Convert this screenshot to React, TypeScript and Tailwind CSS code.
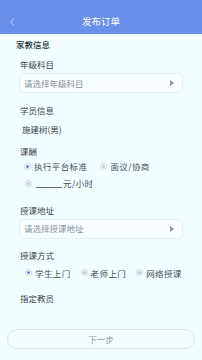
import { ChevronLeft } from 'lucide-react'

function Radio({ checked }: { checked?: boolean }) {
  return (
    <span className="flex h-[7px] w-[7px] shrink-0 items-center justify-center rounded-full border border-[#c9d3e0] bg-white">
      <span className={`h-[3px] w-[3px] rounded-full ${checked ? 'bg-[#5b86e5]' : 'bg-[#b8c2cf]'}`} />
    </span>
  )
}

function Option({ label, checked }: { label: string; checked?: boolean }) {
  return (
    <div className="flex items-center gap-[3px] whitespace-nowrap">
      <Radio checked={checked} />
      <span className="text-[8.5px] tracking-[0.4px] text-[#4a4f57]">{label}</span>
    </div>
  )
}

function SelectBox({ placeholder }: { placeholder: string }) {
  return (
    <div className="mx-[19px] mt-[3px] flex h-[20px] items-center justify-between rounded-[4px] border border-[#e6eef2] bg-[#f8feff] px-[4px]">
      <span className="text-[8.5px] text-[#8a9099]">{placeholder}</span>
      <span className="mr-[4px] h-0 w-0 border-y-[3px] border-l-[4px] border-y-transparent border-l-[#8e949b]" />
    </div>
  )
}

function Label({ text, className = '' }: { text: string; className?: string }) {
  return <div className={`px-[20px] text-[8.5px] leading-[12px] text-[#3e4349] ${className}`}>{text}</div>
}

export default function App() {
  return (
    <div
      className="flex h-[360px] w-[202px] flex-col bg-[#f1fdff]"
      style={{ fontFamily: '"Noto Sans CJK SC", "Noto Sans", sans-serif' }}
    >
      {/* Header */}
      <div className="relative flex h-[34px] items-end justify-center bg-[#6a8fe8] pb-[6px]">
        <ChevronLeft className="absolute left-[6px] bottom-[6px] h-[12px] w-[12px] text-[#dfe8ff]" strokeWidth={1.5} />
        <span className="text-[9.5px] leading-[14px] text-white">发布订单</span>
      </div>

      <div className="px-[16px] pt-[4px] text-[8.5px] leading-[12px] font-medium text-[#2f3338]">家教信息</div>

      <Label text="年级科目" className="mt-[8px]" />
      <SelectBox placeholder="请选择年级科目" />

      <Label text="学员信息" className="mt-[11px]" />
      <div className="mt-[7px] px-[22px] text-[8.5px] leading-[12px] text-[#3a3f45]">施建树(男)</div>

      <Label text="课酬" className="mt-[10px]" />
      <div className="mt-[3px] flex items-center gap-[13px] px-[24px]">
        <Option label="执行平台标准" checked />
        <Option label="面议/协商" />
      </div>
      <div className="mt-[4px] flex items-center px-[25px]">
        <Radio />
        <span className="ml-[4px] mt-[8px] h-px w-[26px] bg-[#6b7078]" />
        <span className="ml-[1px] text-[8.5px] tracking-[0.4px] text-[#4a4f57]">元/小时</span>
      </div>

      <Label text="授课地址" className="mt-[14px]" />
      <SelectBox placeholder="请选择授课地址" />

      <Label text="授课方式" className="mt-[10px]" />
      <div className="mt-[6px] flex items-center gap-[10px] px-[25px]">
        <Option label="学生上门" checked />
        <Option label="老师上门" />
        <Option label="网络授课" />
      </div>

      <Label text="指定教员" className="mt-[13px]" />

      <div className="mt-auto mb-[11px] flex h-[20px] mx-[7px] items-center justify-center rounded-full border border-[#dbe6ea] bg-[#f3fdff]">
        <span className="text-[8.5px] text-[#8f959c]">下一步</span>
      </div>
    </div>
  )
}
